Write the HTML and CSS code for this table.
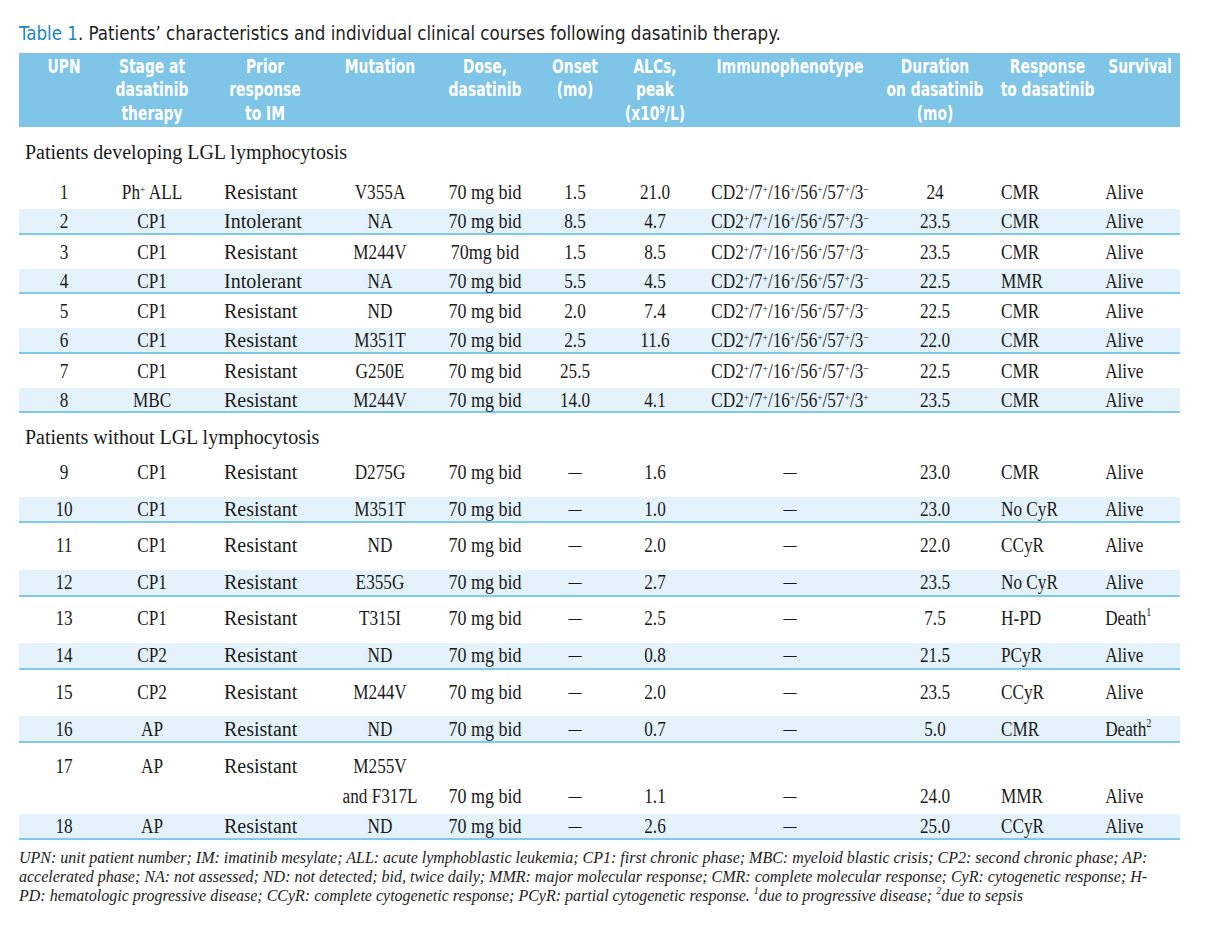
FILE: index.html
```html
<!DOCTYPE html>
<html lang="en">
<head>
<meta charset="utf-8">
<title>Table 1</title>
<link rel="stylesheet" href="styles.css">
</head>
<body>
<div class="page">
  <h1 class="caption"><span class="tnum">Table 1</span>. Patients’ characteristics and individual clinical courses following dasatinib therapy.</h1>
  <div class="tbl" role="table">
    <div class="row head" role="row">
      <div role="columnheader">UPN</div>
      <div role="columnheader">Stage at<br>dasatinib<br>therapy</div>
      <div role="columnheader">Prior<br>response<br>to IM</div>
      <div role="columnheader">Mutation</div>
      <div role="columnheader">Dose,<br>dasatinib</div>
      <div role="columnheader">Onset<br>(mo)</div>
      <div role="columnheader">ALCs,<br>peak<br>(x10<sup class="hs">9</sup>/L)</div>
      <div role="columnheader">Immunophenotype</div>
      <div role="columnheader">Duration<br>on dasatinib<br>(mo)</div>
      <div role="columnheader">Response<br>to dasatinib</div>
      <div role="columnheader">Survival</div>
    </div>

    <div class="grp grp1" role="row">Patients developing LGL lymphocytosis</div>

    <div class="row ra" role="row"><div>1</div><div>Ph<sup class="sp">+</sup> ALL</div><div>Resistant</div><div>V355A</div><div>70 mg bid</div><div>1.5</div><div>21.0</div><div>CD2<sup class="sp">+</sup>/7<sup class="sp">+</sup>/16<sup class="sp">+</sup>/56<sup class="sp">+</sup>/57<sup class="sp">+</sup>/3<sup class="sp">−</sup></div><div>24</div><div>CMR</div><div>Alive</div></div>
    <div class="row ra sh" role="row"><div>2</div><div>CP1</div><div>Intolerant</div><div>NA</div><div>70 mg bid</div><div>8.5</div><div>4.7</div><div>CD2<sup class="sp">+</sup>/7<sup class="sp">+</sup>/16<sup class="sp">+</sup>/56<sup class="sp">+</sup>/57<sup class="sp">+</sup>/3<sup class="sp">−</sup></div><div>23.5</div><div>CMR</div><div>Alive</div></div>
    <div class="row ra" role="row"><div>3</div><div>CP1</div><div>Resistant</div><div>M244V</div><div>70mg bid</div><div>1.5</div><div>8.5</div><div>CD2<sup class="sp">+</sup>/7<sup class="sp">+</sup>/16<sup class="sp">+</sup>/56<sup class="sp">+</sup>/57<sup class="sp">+</sup>/3<sup class="sp">−</sup></div><div>23.5</div><div>CMR</div><div>Alive</div></div>
    <div class="row ra sh" role="row"><div>4</div><div>CP1</div><div>Intolerant</div><div>NA</div><div>70 mg bid</div><div>5.5</div><div>4.5</div><div>CD2<sup class="sp">+</sup>/7<sup class="sp">+</sup>/16<sup class="sp">+</sup>/56<sup class="sp">+</sup>/57<sup class="sp">+</sup>/3<sup class="sp">−</sup></div><div>22.5</div><div>MMR</div><div>Alive</div></div>
    <div class="row ra" role="row"><div>5</div><div>CP1</div><div>Resistant</div><div>ND</div><div>70 mg bid</div><div>2.0</div><div>7.4</div><div>CD2<sup class="sp">+</sup>/7<sup class="sp">+</sup>/16<sup class="sp">+</sup>/56<sup class="sp">+</sup>/57<sup class="sp">+</sup>/3<sup class="sp">−</sup></div><div>22.5</div><div>CMR</div><div>Alive</div></div>
    <div class="row ra sh" role="row"><div>6</div><div>CP1</div><div>Resistant</div><div>M351T</div><div>70 mg bid</div><div>2.5</div><div>11.6</div><div>CD2<sup class="sp">+</sup>/7<sup class="sp">+</sup>/16<sup class="sp">+</sup>/56<sup class="sp">+</sup>/57<sup class="sp">+</sup>/3<sup class="sp">−</sup></div><div>22.0</div><div>CMR</div><div>Alive</div></div>
    <div class="row ra" role="row"><div>7</div><div>CP1</div><div>Resistant</div><div>G250E</div><div>70 mg bid</div><div>25.5</div><div></div><div>CD2<sup class="sp">+</sup>/7<sup class="sp">+</sup>/16<sup class="sp">+</sup>/56<sup class="sp">+</sup>/57<sup class="sp">+</sup>/3<sup class="sp">−</sup></div><div>22.5</div><div>CMR</div><div>Alive</div></div>
    <div class="row ra sh" role="row"><div>8</div><div>MBC</div><div>Resistant</div><div>M244V</div><div>70 mg bid</div><div>14.0</div><div>4.1</div><div>CD2<sup class="sp">+</sup>/7<sup class="sp">+</sup>/16<sup class="sp">+</sup>/56<sup class="sp">+</sup>/57<sup class="sp">+</sup>/3<sup class="sp">+</sup></div><div>23.5</div><div>CMR</div><div>Alive</div></div>

    <div class="grp grp2" role="row">Patients without LGL lymphocytosis</div>

    <div class="row rb" role="row"><div>9</div><div>CP1</div><div>Resistant</div><div>D275G</div><div>70 mg bid</div><div class="d">–</div><div>1.6</div><div class="d">–</div><div>23.0</div><div>CMR</div><div>Alive</div></div>
    <div class="row rb sh" role="row"><div>10</div><div>CP1</div><div>Resistant</div><div>M351T</div><div>70 mg bid</div><div class="d">–</div><div>1.0</div><div class="d">–</div><div>23.0</div><div>No CyR</div><div>Alive</div></div>
    <div class="row rb" role="row"><div>11</div><div>CP1</div><div>Resistant</div><div>ND</div><div>70 mg bid</div><div class="d">–</div><div>2.0</div><div class="d">–</div><div>22.0</div><div>CCyR</div><div>Alive</div></div>
    <div class="row rb sh" role="row"><div>12</div><div>CP1</div><div>Resistant</div><div>E355G</div><div>70 mg bid</div><div class="d">–</div><div>2.7</div><div class="d">–</div><div>23.5</div><div>No CyR</div><div>Alive</div></div>
    <div class="row rb" role="row"><div>13</div><div>CP1</div><div>Resistant</div><div>T315I</div><div>70 mg bid</div><div class="d">–</div><div>2.5</div><div class="d">–</div><div>7.5</div><div>H-PD</div><div>Death<sup class="sd">1</sup></div></div>
    <div class="row rb sh" role="row"><div>14</div><div>CP2</div><div>Resistant</div><div>ND</div><div>70 mg bid</div><div class="d">–</div><div>0.8</div><div class="d">–</div><div>21.5</div><div>PCyR</div><div>Alive</div></div>
    <div class="row rb" role="row"><div>15</div><div>CP2</div><div>Resistant</div><div>M244V</div><div>70 mg bid</div><div class="d">–</div><div>2.0</div><div class="d">–</div><div>23.5</div><div>CCyR</div><div>Alive</div></div>
    <div class="row rb sh" role="row"><div>16</div><div>AP</div><div>Resistant</div><div>ND</div><div>70 mg bid</div><div class="d">–</div><div>0.7</div><div class="d">–</div><div>5.0</div><div>CMR</div><div>Death<sup class="sd">2</sup></div></div>
    <div class="row rc" role="row"><div class="top">17</div><div class="top">AP</div><div class="top">Resistant</div><div class="top">M255V<br>and F317L</div><div>70 mg bid</div><div class="d">–</div><div>1.1</div><div class="d">–</div><div>24.0</div><div>MMR</div><div>Alive</div></div>
    <div class="row rd sh" role="row"><div>18</div><div>AP</div><div>Resistant</div><div>ND</div><div>70 mg bid</div><div class="d">–</div><div>2.6</div><div class="d">–</div><div>25.0</div><div>CCyR</div><div>Alive</div></div>
  </div>
  <p class="notes">UPN: unit patient number; IM: imatinib mesylate; ALL: acute lymphoblastic leukemia; CP1: first chronic phase; MBC: myeloid blastic crisis; CP2: second chronic phase; AP:<br>accelerated phase; NA: not assessed; ND: not detected; bid, twice daily; MMR: major molecular response; CMR: complete molecular response; CyR: cytogenetic response; H-<br>PD: hematologic progressive disease; CCyR: complete cytogenetic response; PCyR: partial cytogenetic response. <sup class="fs">1</sup>due to progressive disease; <sup class="fs">2</sup>due to sepsis</p>
</div>
</body>
</html>
```

FILE: styles.css
```css
html, body {
  margin: 0;
  padding: 0;
  background: #ffffff;
}

.page {
  width: 1206px;
  padding: 22px 0 0 19px;
  box-sizing: border-box;
}

.caption {
  margin: 0 0 7px 0;
  font-family: "DejaVu Sans Condensed", "Liberation Sans", sans-serif;
  font-weight: normal;
  font-size: 18.6px;
  line-height: 24px;
  color: #1e1e1e;
  white-space: nowrap;
}

.tnum {
  color: #1a86c2;
}

.tbl {
  width: 1161px;
  font-family: "Liberation Serif", "Times New Roman", serif;
  font-size: 20px;
  color: #1a1a1a;
}

.row {
  display: grid;
  grid-template-columns: 90px 86px 140px 90px 120px 60px 100px 170px 120px 105px 80px;
  align-items: center;
  box-sizing: border-box;
}

.row > div {
  margin: 0 -20px;
  text-align: center;
  white-space: nowrap;
  line-height: 24px;
  transform: scaleX(0.86);
}

/* Prior response: left aligned, natural width */
.row > div:nth-child(3) {
  margin: 0;
  text-align: left;
  padding-left: 29px;
  transform: none;
}

.row > div:nth-child(5) {
  transform: scaleX(0.9);
}

.row > div.d {
  transform: scaleX(1.3);
}

/* Response and survival: left aligned */
.row > div:nth-child(10),
.row > div:nth-child(11) {
  margin: 0;
  text-align: left;
  transform-origin: left center;
}
.row > div:nth-child(10) { padding-left: 7px; }
.row > div:nth-child(11) { padding-left: 6px; }

/* Header band */
.row.head {
  background: #7ec5e8;
  height: 74px;
  align-items: start;
  padding-top: 1.5px;
}

.row.head > div {
  margin: 0 -30px;
  padding: 0;
  text-align: center;
  font-family: "DejaVu Sans Condensed", "Liberation Sans", sans-serif;
  font-weight: bold;
  font-size: 20px;
  line-height: 23.5px;
  color: #ffffff;
  transform: scaleX(0.77);
  transform-origin: center center;
}

.hs {
  font-size: 11px;
  vertical-align: 7px;
  line-height: 0;
}

/* Group labels */
.grp {
  padding-left: 6px;
  line-height: 24px;
  white-space: nowrap;
  box-sizing: border-box;
}

.grp1 {
  height: 48px;
  padding-top: 13px;
}

.grp2 {
  height: 37px;
  padding-top: 12px;
}

/* Row heights */
.ra { height: 34px; }
.ra.sh { height: 25.5px; }

.rb { height: 46.5px; padding-bottom: 3px; }
.rb.sh { height: 26.75px; padding-bottom: 0; }

.rd { height: 25.5px; }

.sh {
  background: #e4f3fb;
  border-bottom: 2px solid #80c9ea;
}

/* Two-line row 17 */
.rc {
  height: 71px;
  align-items: end;
}

.rc > div {
  line-height: 30px;
  padding-bottom: 3px;
}

.rc > div.top {
  align-self: start;
  padding-top: 8px;
  padding-bottom: 0;
}

.sp {
  font-size: 11px;
  vertical-align: 6px;
  line-height: 0;
}

.sd {
  font-size: 12px;
  vertical-align: 9px;
  line-height: 0;
}

.notes {
  margin: 8px 0 0 0;
  font-family: "Liberation Serif", "Times New Roman", serif;
  font-style: italic;
  font-size: 16px;
  line-height: 19px;
  color: #222222;
  white-space: nowrap;
}

.fs {
  font-size: 10px;
  vertical-align: 7px;
  line-height: 0;
}
```
